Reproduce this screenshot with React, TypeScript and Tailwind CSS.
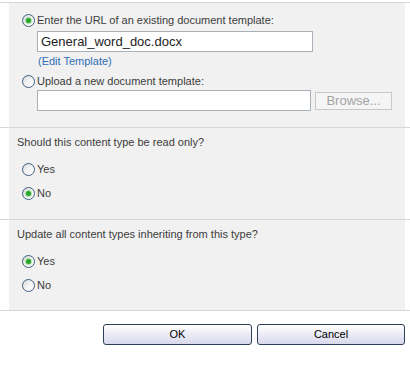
import React from 'react';

function Radio({ checked }: { checked?: boolean }) {
  return (
    <span className="w-[13px] h-[13px] rounded-full border border-[#3f5f7f] bg-gradient-to-br from-[#d4d8dc] via-[#f4f4f4] to-white flex items-center justify-center shrink-0">
      {checked && <span className="w-[5px] h-[5px] rounded-full bg-[#2aa52a] shadow-[0_0_1px_1px_#a6dca6]"></span>}
    </span>
  );
}

function Option({ checked, label }: { checked?: boolean; label: string }) {
  return (
    <div className="flex items-center gap-[2px] h-[14px]">
      <Radio checked={checked} />
      <span className="leading-[14px]">{label}</span>
    </div>
  );
}

function Section({ children }: { children: React.ReactNode }) {
  return (
    <div className="flex border-b border-[#d6d6d6]">
      <div className="w-[9px] bg-white"></div>
      <div className="w-[396px] bg-[#f1f1f1]">{children}</div>
      <div className="flex-1 bg-white"></div>
    </div>
  );
}

export default function App() {
  return (
    <div className="w-[410px] h-[370px] bg-white text-[11px] text-[#3c3c3c] font-['Liberation_Sans',Arial,sans-serif] overflow-hidden">
      <div className="h-[3px] border-b border-[#d6d6d6]"></div>

      <Section>
        <div className="h-[124px] pl-[13px] pt-[10px]">
          <Option checked label="Enter the URL of an existing document template:" />
          <div className="ml-[15px] mt-[4px] w-[276px] h-[21px] border border-[#a9b0b8] bg-white flex items-center pl-[3px] text-[13px] text-[#222]">
            General_word_doc.docx
          </div>
          <div className="ml-[16px] mt-[2px] h-[14px] leading-[14px] text-[#2f6db5]">(Edit Template)</div>
          <div className="mt-[6px]">
            <Option label="Upload a new document template:" />
          </div>
          <div className="ml-[15px] mt-[2px] flex items-center gap-[4px]">
            <div className="w-[274px] h-[21px] border border-[#a9b0b8] bg-white"></div>
            <div className="w-[77px] h-[18px] border border-[#c9c9c9] bg-[#f5f5f5] flex items-center justify-center text-[13px] text-[#a3a3a3]">
              Browse...
            </div>
          </div>
        </div>
      </Section>

      <Section>
        <div className="h-[91px] pt-[7px]">
          <div className="pl-[8px] h-[14px] leading-[14px]">Should this content type be read only?</div>
          <div className="pl-[13px] mt-[13px]">
            <Option label="Yes" />
          </div>
          <div className="pl-[13px] mt-[10px]">
            <Option checked label="No" />
          </div>
        </div>
      </Section>

      <Section>
        <div className="h-[90px] pt-[7px]">
          <div className="pl-[8px] h-[14px] leading-[14px]">Update all content types inheriting from this type?</div>
          <div className="pl-[13px] mt-[13px]">
            <Option checked label="Yes" />
          </div>
          <div className="pl-[13px] mt-[10px]">
            <Option label="No" />
          </div>
        </div>
      </Section>

      <div className="flex justify-end gap-[5px] pr-[5px] mt-[13px]">
        <button className="w-[149px] h-[21px] rounded-[3px] border border-[#2b3f58] bg-gradient-to-b from-white to-[#d8d8ec] text-[11px] text-black">
          OK
        </button>
        <button className="w-[148px] h-[21px] rounded-[3px] border border-[#2b3f58] bg-gradient-to-b from-white to-[#d8d8ec] text-[11px] text-black">
          Cancel
        </button>
      </div>
    </div>
  );
}
